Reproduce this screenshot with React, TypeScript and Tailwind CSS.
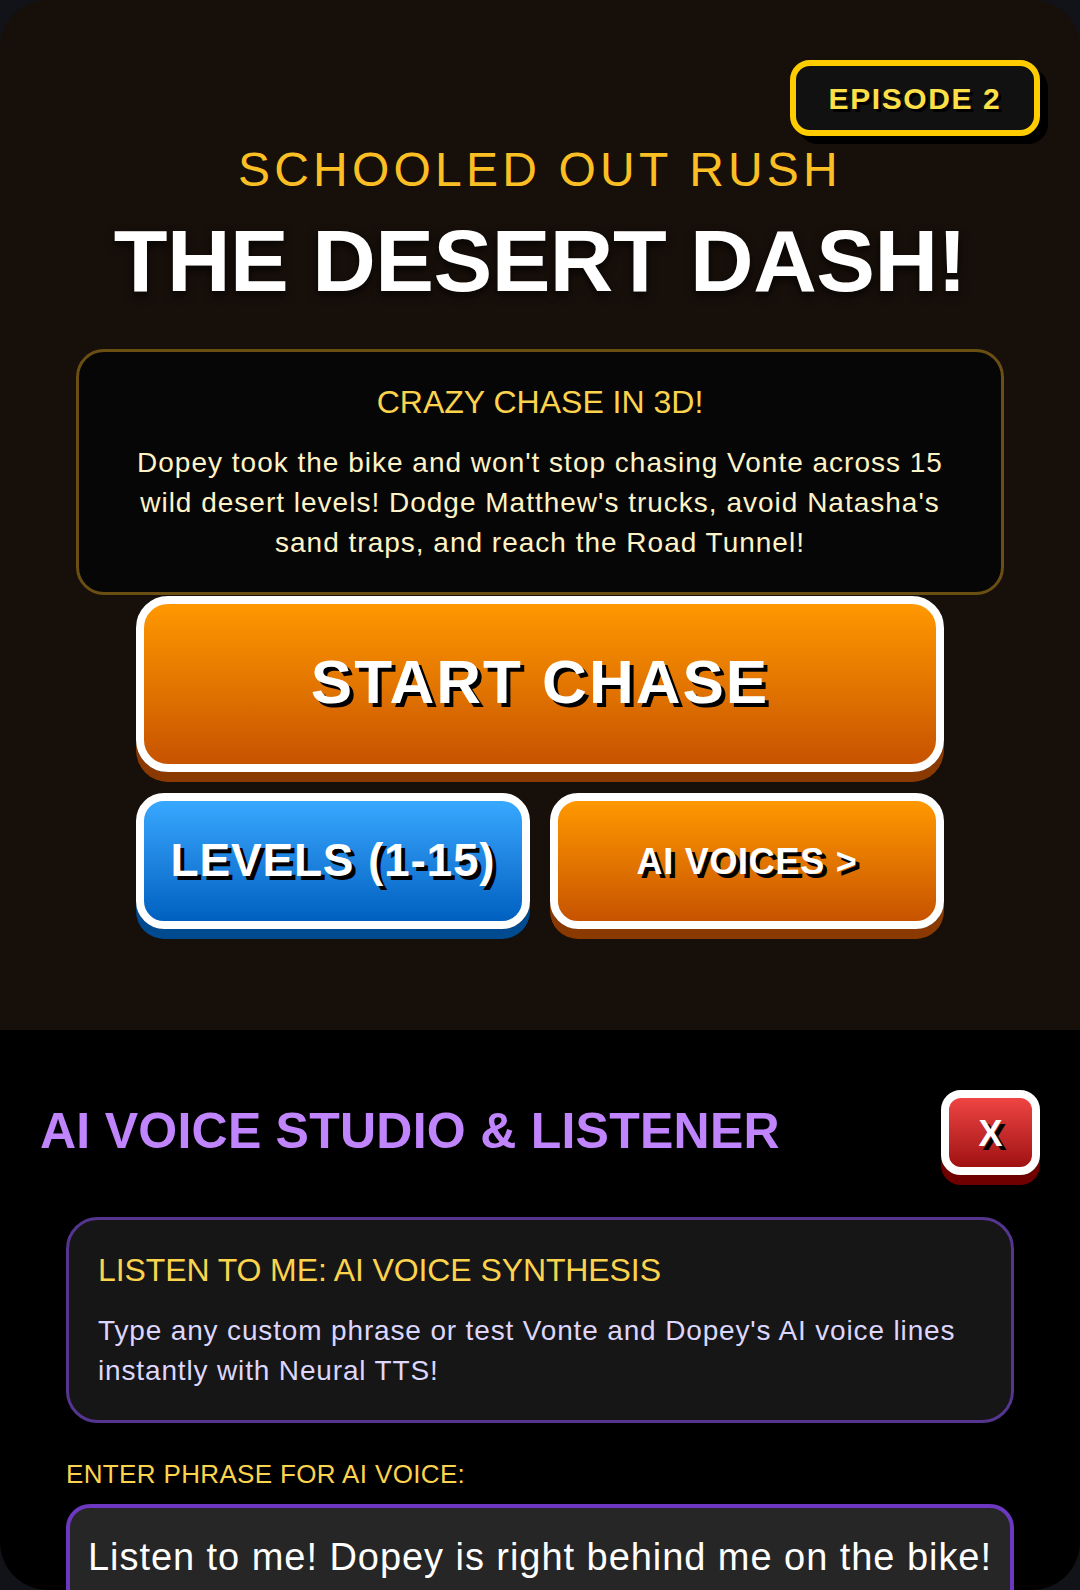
export default function App() {
  return (
    <div className="h-[1590px] w-[1080px] overflow-hidden bg-[#111318] font-['Liberation_Sans',sans-serif]">
      <div className="h-[1590px] overflow-hidden rounded-[48px] bg-black shadow-[inset_0_0_0_1px_#222]">
        <section className="relative flex h-[1030px] flex-col items-center bg-[#170f0a] pt-[140px]">
          <div className="absolute right-[40px] top-[60px] flex h-[76px] w-[250px] items-center justify-center rounded-[20px] border-[6px] border-[#ffcc00] bg-[#111] text-[30px] font-bold tracking-[1.6px] text-[#fde047] shadow-[8px_8px_0_#000] [text-shadow:3px_3px_0_#000]">
            EPISODE 2
          </div>
          <div className="text-[48px] leading-[60px] tracking-[4.2px] text-[#fbbf24]">SCHOOLED OUT RUSH</div>
          <h1 className="mt-[11px] text-[88px] font-bold leading-[100px] tracking-[-0.5px] text-white [text-shadow:0_4px_10px_rgba(0,0,0,0.7)]">THE DESERT DASH!</h1>
          <div className="mt-[38px] flex h-[246px] w-[928px] flex-col items-center rounded-[28px] border-[3px] border-[#6b4f12] bg-[#060606] pt-[28px] text-center">
            <div className="text-[32px] leading-[44px] text-[#fcd34d]">CRAZY CHASE IN 3D!</div>
            <p className="mt-[19px] text-[28px] leading-[40px] tracking-[1px] text-[#fef3c7]">
              Dopey took the bike and won't stop chasing Vonte across 15
              <br />
              wild desert levels! Dodge Matthew's trucks, avoid Natasha's
              <br />
              sand traps, and reach the Road Tunnel!
            </p>
          </div>
          <div className="mt-[1px] flex h-[176px] w-[808px] items-center justify-center rounded-[32px] border-[8px] border-white bg-gradient-to-b from-[#ff9800] to-[#c75300] pb-[6px] text-[62px] font-bold tracking-[2px] text-white shadow-[0_10px_0_#8a3a00] [text-shadow:4px_4px_0_#000]">
            START CHASE
          </div>
          <div className="mt-[21px] flex w-[808px] gap-[20px]">
            <div className="flex h-[136px] flex-1 items-center justify-center rounded-[28px] border-[8px] border-white bg-gradient-to-b from-[#38a8ff] to-[#0060c0] pb-[2px] text-[46px] font-bold tracking-[0.8px] text-white shadow-[0_10px_0_#004a90] [text-shadow:4px_4px_0_#000]">
              LEVELS (1-15)
            </div>
            <div className="flex h-[136px] flex-1 items-center justify-center rounded-[28px] border-[8px] border-white bg-gradient-to-b from-[#ff9800] to-[#c75300] pt-[1px] text-[36px] font-bold tracking-[0.7px] text-white shadow-[0_10px_0_#8a3a00] [text-shadow:4px_4px_0_#000]">
              AI VOICES &gt;
            </div>
          </div>
        </section>
        <section className="bg-black px-[40px] pt-[60px]">
          <div className="flex h-[85px] items-center justify-between">
            <h2 className="pb-[3px] text-[50px] font-bold leading-[56px] tracking-[0.25px] text-[#c084fc]">AI VOICE STUDIO &amp; LISTENER</h2>
            <div className="flex h-[85px] w-[99px] items-center justify-center rounded-[20px] border-[8px] border-white bg-gradient-to-b from-[#ef4444] to-[#a01010] pt-[2px] text-[36px] font-bold text-white shadow-[0_10px_0_#700000] [text-shadow:4px_4px_0_#000]">
              X
            </div>
          </div>
          <div className="mx-[26px] mt-[42px] h-[206px] rounded-[32px] border-[3px] border-[#553590] bg-[#161616] px-[29px] pt-[30px]">
            <div className="text-[32px] leading-[40px] tracking-[-0.1px] text-[#fcd34d]">LISTEN TO ME: AI VOICE SYNTHESIS</div>
            <p className="mt-[21px] text-[28px] leading-[40px] tracking-[0.85px] text-[#ddd6fe]">
              Type any custom phrase or test Vonte and Dopey's AI voice lines
              <br />
              instantly with Neural TTS!
            </p>
          </div>
          <div className="mx-[26px] mt-[33px] text-[26px] leading-[36px] tracking-[0.35px] text-[#fcd34d]">ENTER PHRASE FOR AI VOICE:</div>
          <div className="mx-[26px] mt-[12px] h-[110px] rounded-[24px] border-[4px] border-[#6d38c0] bg-[#262626] pl-[18px] pt-[27px] text-[38px] leading-[44px] tracking-[0.95px] text-white">
            Listen to me! Dopey is right behind me on the bike!
          </div>
        </section>
      </div>
    </div>
  );
}
